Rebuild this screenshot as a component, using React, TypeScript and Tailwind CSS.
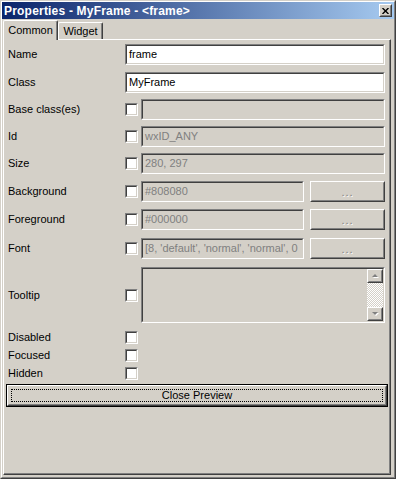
import React from "react";

const font = "font-['Liberation_Sans',Arial,sans-serif]";

function Sunken({ className = "", inner = "", children }: { className?: string; inner?: string; children?: React.ReactNode }) {
  return (
    <div className={`border border-t-[#808080] border-l-[#808080] border-b-white border-r-white ${className}`}>
      <div className={`h-full border border-t-[#404040] border-l-[#404040] border-b-[#d4d0c8] border-r-[#d4d0c8] ${inner}`}>
        {children}
      </div>
    </div>
  );
}

function Raised({ className = "", inner = "", children }: { className?: string; inner?: string; children?: React.ReactNode }) {
  return (
    <div className={`border border-t-white border-l-white border-b-[#404040] border-r-[#404040] bg-[#d4d0c8] ${className}`}>
      <div className={`h-full border border-t-[#d4d0c8] border-l-[#d4d0c8] border-b-[#808080] border-r-[#808080] ${inner}`}>
        {children}
      </div>
    </div>
  );
}

function Field({ value = "", disabled = false, className = "" }: { value?: string; disabled?: boolean; className?: string }) {
  return (
    <Sunken
      className={`h-[21px] ${className}`}
      inner={`flex items-center overflow-hidden whitespace-nowrap pl-[2px] text-[11px] ${disabled ? "bg-[#d4d0c8] text-[#808080]" : "bg-white text-black"}`}
    >
      {value}
    </Sunken>
  );
}

function Check() {
  return <Sunken className="h-[13px] w-[13px] shrink-0" inner="bg-white" />;
}

function Dots() {
  return (
    <Raised className="h-[21px] w-[75px] ml-[6px] shrink-0" inner="flex items-center justify-center">
      <span className="text-[11px] leading-none tracking-[1px] text-[#808080] [text-shadow:1px_1px_0_#fff] pt-[2px]">...</span>
    </Raised>
  );
}

function Label({ children }: { children: React.ReactNode }) {
  return <div className="w-[117px] shrink-0 text-[11px] text-black">{children}</div>;
}

function Arrow({ up }: { up: boolean }) {
  return (
    <svg width="9" height="6" viewBox="0 0 9 6">
      {up ? (
        <>
          <polygon points="2,5 5,2 8,5" fill="#ffffff" />
          <polygon points="1,4 4,1 7,4" fill="#808080" />
        </>
      ) : (
        <>
          <polygon points="2,2 8,2 5,5" fill="#ffffff" />
          <polygon points="1,1 7,1 4,4" fill="#808080" />
        </>
      )}
    </svg>
  );
}

export default function App() {
  return (
    <div className={`w-[396px] h-[479px] bg-[#d4d0c8] border border-t-[#d4d0c8] border-l-[#d4d0c8] border-b-[#404040] border-r-[#404040] ${font}`}>
      <div className="h-full flex flex-col border border-t-white border-l-white border-b-[#808080] border-r-[#808080]">
        {/* title bar */}
        <div className="h-[17px] shrink-0 flex items-center justify-between bg-[linear-gradient(to_right,#0a246a,#a6caf0)] pl-[2px] pr-[2px]">
          <span className="text-[12px] font-bold tracking-[0.2px] text-white leading-none whitespace-nowrap">Properties - MyFrame - &lt;frame&gt;</span>
          <Raised className="h-[13px] w-[13px]" inner="flex items-center justify-center">
            <svg width="7" height="6" viewBox="0 0 7 6">
              <path d="M0.5 0L6.5 6M6.5 0L0.5 6" stroke="#000" strokeWidth="1.4" />
            </svg>
          </Raised>
        </div>

        <div className="flex-1 flex flex-col pt-[1px] pl-[1px] pr-[3px] pb-[2px]">
          {/* tabs */}
          <div className="h-[19px] shrink-0 flex items-end">
            <div className="relative z-10 -mb-[1px] h-[20px] w-[55px] bg-[#d4d0c8] border-l border-t border-r border-l-white border-t-white border-r-[#404040] rounded-t-[2px] shadow-[inset_-1px_0_0_#808080] flex items-center justify-center pb-[1px] text-[11px] text-black">
              Common
            </div>
            <div className="h-[17px] w-[45px] bg-[#d4d0c8] border-l border-t border-r border-l-white border-t-white border-r-[#404040] rounded-t-[2px] shadow-[inset_-1px_0_0_#808080] flex items-center justify-center pt-[1px] text-[11px] text-black">
              Widget
            </div>
          </div>

          {/* panel */}
          <div className="flex-1 border border-t-white border-l-white border-b-[#404040] border-r-[#404040]">
            <div className="h-full flex flex-col pt-[4px] border-r border-b border-r-[#808080] border-b-[#808080]">
              <div className="flex flex-col pl-[4px] pr-[4px]">
                <div className="flex items-center h-[21px]">
                  <Label>Name</Label>
                  <Field value="frame" className="flex-1" />
                </div>
                <div className="flex items-center h-[21px] mt-[7px]">
                  <Label>Class</Label>
                  <Field value="MyFrame" className="flex-1" />
                </div>
                <div className="flex items-center h-[21px] mt-[6px]">
                  <Label>Base class(es)</Label>
                  <Check />
                  <Field disabled className="flex-1 ml-[3px]" />
                </div>
                <div className="flex items-center h-[21px] mt-[6px]">
                  <Label>Id</Label>
                  <Check />
                  <Field value="wxID_ANY" disabled className="flex-1 ml-[3px]" />
                </div>
                <div className="flex items-center h-[21px] mt-[6px]">
                  <Label>Size</Label>
                  <Check />
                  <Field value="280, 297" disabled className="flex-1 ml-[3px]" />
                </div>
                <div className="flex items-center h-[21px] mt-[7px]">
                  <Label>Background</Label>
                  <Check />
                  <Field value="#808080" disabled className="flex-1 ml-[3px]" />
                  <Dots />
                </div>
                <div className="flex items-center h-[21px] mt-[7px]">
                  <Label>Foreground</Label>
                  <Check />
                  <Field value="#000000" disabled className="flex-1 ml-[3px]" />
                  <Dots />
                </div>
                <div className="flex items-center h-[21px] mt-[8px]">
                  <Label>Font</Label>
                  <Check />
                  <Field value="[8, 'default', 'normal', 'normal', 0" disabled className="flex-1 ml-[3px]" />
                  <Dots />
                </div>
                <div className="flex items-center h-[56px] mt-[8px]">
                  <Label>Tooltip</Label>
                  <Check />
                  <Sunken className="flex-1 h-full ml-[3px]" inner="bg-[#d4d0c8] flex justify-end">
                    <div className="w-[16px] h-full flex flex-col">
                      <Raised className="h-[14px] shrink-0" inner="flex items-center justify-center">
                        <Arrow up />
                      </Raised>
                      <div className="flex-1 bg-[repeating-conic-gradient(#d4d0c8_0_25%,#ffffff_0_50%)] bg-[length:2px_2px]" />
                      <Raised className="h-[14px] shrink-0" inner="flex items-center justify-center">
                        <Arrow up={false} />
                      </Raised>
                    </div>
                  </Sunken>
                </div>
                <div className="flex items-center h-[18px] mt-[5px]">
                  <Label>Disabled</Label>
                  <Check />
                </div>
                <div className="flex items-center h-[18px]">
                  <Label>Focused</Label>
                  <Check />
                </div>
                <div className="flex items-center h-[18px]">
                  <Label>Hidden</Label>
                  <Check />
                </div>
              </div>

              <div className="mt-[2px] ml-[2px] mr-[1px] h-[23px] border border-black">
                <Raised className="h-full" inner="p-[2px]">
                  <div className="h-full border border-dotted border-black flex items-center justify-center text-[11px] text-black">
                    Close Preview
                  </div>
                </Raised>
              </div>
            </div>
          </div>
        </div>
      </div>
    </div>
  );
}
